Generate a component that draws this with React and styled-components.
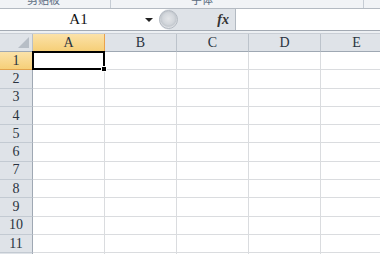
import React from "react";
import styled, { createGlobalStyle } from "styled-components";

const GlobalStyle = createGlobalStyle`
  html, body {
    margin: 0;
    padding: 0;
    background: #ffffff;
    overflow: hidden;
  }
  * {
    box-sizing: border-box;
  }
`;

const columns = ["A", "B", "C", "D", "E"];
const rows = [1, 2, 3, 4, 5, 6, 7, 8, 9, 10, 11, 12];

const Page = styled.div`
  width: 380px;
  height: 254px;
  overflow: hidden;
  font-family: "Liberation Serif", "DejaVu Serif", serif;
`;

const Ribbon = styled.div`
  display: flex;
  height: 9px;
  background: #f1f3f6;
  border-bottom: 1px solid #b4bac2;
  overflow: hidden;
`;

const RibbonGroup = styled.div`
  flex: none;
  width: ${(p) => p.$width}px;
  padding-left: ${(p) => p.$indent}px;
  border-right: 1px solid #c6ccd4;
  overflow: hidden;
`;

const RibbonLabel = styled.div`
  margin-top: -8px;
  font-family: "Noto Sans CJK SC", sans-serif;
  font-size: 11px;
  line-height: 14px;
  color: #596a80;
`;

const FormulaBar = styled.div`
  display: flex;
  height: 22px;
  background: #ffffff;
  border-bottom: 1px solid #a3aab3;
`;

const NameBox = styled.div`
  flex: none;
  display: flex;
  align-items: center;
  width: 159px;
  padding-right: 6px;
`;

const NameText = styled.div`
  flex: 1;
  text-align: center;
  font-size: 15px;
  color: #111;
  padding-left: 12px;
`;

const DropArrow = styled.div`
  width: 0;
  height: 0;
  border-left: 4px solid transparent;
  border-right: 4px solid transparent;
  border-top: 4px solid #222;
  margin-top: 1px;
`;

const FxPanel = styled.div`
  flex: none;
  display: flex;
  align-items: center;
  justify-content: space-between;
  width: 77px;
  background: #dfe3e8;
  border-radius: 11px 0 0 11px;
  border-right: 1px solid #b3bac2;
  padding-right: 6px;
`;

const Knob = styled.div`
  width: 19px;
  height: 19px;
  border-radius: 50%;
  border: 1px solid #b3b9c1;
  background: radial-gradient(circle at 50% 45%, #e4e6e9 0, #d3d7dc 45%, #c4c9cf 60%, #eceef1 75%, #f4f5f7 100%);
`;

const FxLabel = styled.span`
  font-family: "Liberation Serif", "DejaVu Serif", serif;
  font-style: italic;
  font-weight: bold;
  font-size: 14px;
  color: #333;
`;

const FormulaInput = styled.div`
  flex: 1;
  background: #ffffff;
`;

const Spacer = styled.div`
  height: 3px;
  background: #edf0f3;
  border-bottom: 1px solid #c9ced5;
`;

const Row = styled.div`
  display: flex;
  height: ${(p) => (p.$head ? 18 : 18.3)}px;
`;

const Corner = styled.div`
  position: relative;
  flex: none;
  width: 33px;
  background: #dfe3e8;
  border-right: 1px solid #b9c0c8;
  border-bottom: 1px solid #9fa8b3;
`;

const CornerTriangle = styled.div`
  position: absolute;
  right: 3px;
  bottom: 3px;
  width: 0;
  height: 0;
  border-left: 11px solid transparent;
  border-bottom: 11px solid #b7bec6;
`;

const ColHeader = styled.div`
  flex: none;
  width: 72px;
  display: flex;
  align-items: center;
  justify-content: center;
  font-size: 14px;
  color: #2a3340;
  background: ${(p) =>
    p.$active ? "linear-gradient(#fbe2a9, #f6cf78)" : "#dfe3e8"};
  border-right: 1px solid ${(p) => (p.$active ? "#eaa24c" : "#bcc3cb")};
  border-bottom: 1px solid ${(p) => (p.$active ? "#e2a34d" : "#9fa8b3")};
`;

const RowHeader = styled.div`
  flex: none;
  width: 33px;
  display: flex;
  align-items: center;
  justify-content: center;
  font-size: 14px;
  color: #2a3340;
  background: ${(p) =>
    p.$active ? "linear-gradient(#fbe2a9, #f6cf78)" : "#dfe3e8"};
  border-right: 1px solid ${(p) => (p.$active ? "#e2a34d" : "#9fa8b3")};
  border-bottom: 1px solid ${(p) => (p.$active ? "#e2a34d" : "#c3cad2")};
`;

const Cell = styled.div`
  position: relative;
  flex: none;
  width: 72px;
  border-right: 1px solid #dadcdf;
  border-bottom: 1px solid #dadcdf;
`;

const Selection = styled.div`
  position: absolute;
  left: -1px;
  top: -1px;
  right: -1px;
  bottom: -1px;
  border: 2px solid #000;
  z-index: 2;
`;

const FillHandle = styled.div`
  position: absolute;
  right: -4px;
  bottom: -4px;
  width: 6px;
  height: 6px;
  background: #000;
  border: 1px solid #fff;
`;

export default function App() {
  return (
    <Page>
      <GlobalStyle />
      <Ribbon>
        <RibbonGroup $width={111} $indent={27}>
          <RibbonLabel>剪贴板</RibbonLabel>
        </RibbonGroup>
        <RibbonGroup $width={253} $indent={80}>
          <RibbonLabel>字体</RibbonLabel>
        </RibbonGroup>
      </Ribbon>
      <FormulaBar>
        <NameBox>
          <NameText>A1</NameText>
          <DropArrow />
        </NameBox>
        <FxPanel>
          <Knob />
          <FxLabel>fx</FxLabel>
        </FxPanel>
        <FormulaInput />
      </FormulaBar>
      <Spacer />
      <Row $head>
        <Corner>
          <CornerTriangle />
        </Corner>
        {columns.map((c) => (
          <ColHeader key={c} $active={c === "A"}>
            {c}
          </ColHeader>
        ))}
      </Row>
      {rows.map((r) => (
        <Row key={r}>
          <RowHeader $active={r === 1}>{r}</RowHeader>
          {columns.map((c) => (
            <Cell key={c}>
              {r === 1 && c === "A" && (
                <Selection>
                  <FillHandle />
                </Selection>
              )}
            </Cell>
          ))}
        </Row>
      ))}
    </Page>
  );
}
